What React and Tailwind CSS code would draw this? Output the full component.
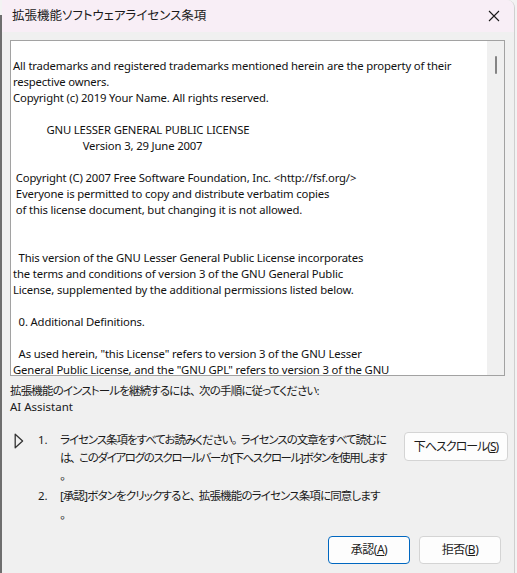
import React from 'react';

const jp = "font-['Noto_Sans','Noto_Sans_CJK_JP',sans-serif] [font-feature-settings:'palt']";
const jpBody = `${jp} text-[11.5px] tracking-[-0.95px] whitespace-nowrap`;

// give 、 and 。 back some of the room that palt takes away
const jpText = (s) =>
  s.split(/([、。])/).map((part, i) =>
    part === '、' || part === '。' ? (
      <span key={i} className="inline-block w-[9px]">{part}</span>
    ) : (
      part
    )
  );

const licenseLines = [
  'All trademarks and registered trademarks mentioned herein are the property of their',
  'respective owners.',
  'Copyright (c) 2019 Your Name. All rights reserved.',
  '',
  '            GNU LESSER GENERAL PUBLIC LICENSE',
  '                         Version 3, 29 June 2007',
  '',
  ' Copyright (C) 2007 Free Software Foundation, Inc. <http://fsf.org/>',
  ' Everyone is permitted to copy and distribute verbatim copies',
  ' of this license document, but changing it is not allowed.',
  '',
  '',
  '  This version of the GNU Lesser General Public License incorporates',
  'the terms and conditions of version 3 of the GNU General Public',
  'License, supplemented by the additional permissions listed below.',
  '',
  '  0. Additional Definitions.',
  '',
  '  As used herein, "this License" refers to version 3 of the GNU Lesser',
  'General Public License, and the "GNU GPL" refers to version 3 of the GNU',
];

const Btn = ({ children, primary, className = '' }) => (
  <button
    className={`h-[28px] rounded-[4px] bg-[#fdfdfd] text-[12px] text-[#1b1b1b] whitespace-nowrap ${jp} ${
      primary ? 'border border-[#0067c0]' : 'border border-[#d4d4d4]'
    } ${className}`}
  >
    {children}
  </button>
);

export default function App() {
  return (
    <div className="w-[517px] h-[573px] flex bg-[#f3f3f3] overflow-hidden">
      {/* desktop strip behind the dialog */}
      <div className="w-[2px] pt-[15px] flex flex-col">
        <div className="flex-1 bg-[#6e6e6e]" />
      </div>

      <div className="w-[513px] h-full flex flex-col bg-[#f0f0f0] border-r border-[#cfcfcf] rounded-tr-[8px] overflow-hidden">
        {/* title bar */}
        <div className="h-[32px] shrink-0 flex items-center justify-between bg-[#f8eef6] pl-[10px] pr-[14px]">
          <span className={`text-[12.5px] text-[#1a1a1a] ${jp}`}>拡張機能ソフトウェアライセンス条項</span>
          <svg width="12" height="12" viewBox="0 0 12 12" className="text-[#1a1a1a]">
            <path d="M1 1 L11 11 M11 1 L1 11" stroke="currentColor" strokeWidth="1.1" fill="none" />
          </svg>
        </div>

        {/* license text box */}
        <div className="mt-[8px] ml-[8px] w-[495px] h-[336px] shrink-0 flex bg-white border border-[#a2a2a2] overflow-hidden">
          <div className="flex-1 pl-[2px] pt-[17px] font-['Noto_Sans',sans-serif] text-[11.3px] leading-[16px] text-[#111] whitespace-pre overflow-hidden tracking-[-0.15px]">
            {licenseLines.map((l, i) => (
              <div key={i} className="h-[16px]">{l}</div>
            ))}
          </div>
          <div className="w-[17px] bg-[#f0f0f0] flex justify-center pt-[15px]">
            <div className="w-[2px] h-[18px] bg-[#858585] rounded-full" />
          </div>
        </div>

        {/* instructions */}
        <div className={`mt-[7px] ml-[8px] leading-[16px] text-[#1a1a1a] ${jpBody}`}>
          <div className="tracking-[-0.85px]">{jpText('拡張機能のインストールを継続するには、次の手順に従ってください:')}</div>
          <div className="tracking-normal">AI Assistant</div>
        </div>

        <div className={`mt-[16px] flex text-[#1a1a1a] ${jpBody}`}>
          <div className="w-[36px] pl-[12px] pt-[2px]">
            <svg width="10" height="16" viewBox="0 0 10 16">
              <path d="M1.2 1.2 L8.6 8 L1.2 14.8 Z" stroke="#333" strokeWidth="1.3" fill="none" strokeLinejoin="round" />
            </svg>
          </div>
          <div className="flex-1 flex flex-col">
            <div className="flex">
              <span className="w-[22px] leading-[18px] tracking-normal">1.</span>
              <div className="w-[344px] leading-[18px]">
                <div className="tracking-[-1.05px]">
                  {jpText('ライセンス条項をすべてお読みください。ライセンスの文章をすべて読むに')}
                </div>
                <div className="tracking-[-1.35px]">
                  {jpText('は、このダイアログのスクロールバーか[下へスクロール]ボタンを使用します')}
                </div>
                <div>{jpText('。')}</div>
              </div>
              <Btn className="mt-[1px] w-[104px] h-[29px] tracking-[-1px]">
                下へスクロール(<span className="underline">S</span>)
              </Btn>
            </div>
            <div className="flex mt-[1px]">
              <span className="w-[22px] leading-[19px] tracking-normal">2.</span>
              <div className="leading-[19px]">
                <div className="tracking-[-0.85px]">
                  {jpText('[承認]ボタンをクリックすると、拡張機能のライセンス条項に同意します')}
                </div>
                <div>{jpText('。')}</div>
              </div>
            </div>
          </div>
        </div>

        {/* footer buttons */}
        <div className="mt-auto mb-[9px] flex justify-end gap-[9px] pr-[13px]">
          <Btn primary className="w-[82px] tracking-[-0.5px]">
            承認(<span className="underline">A</span>)
          </Btn>
          <Btn className="w-[82px] tracking-[-0.5px]">
            拒否(<span className="underline">B</span>)
          </Btn>
        </div>
      </div>
      <div className="w-[2px] bg-[#f3f3f3]" />
    </div>
  );
}
